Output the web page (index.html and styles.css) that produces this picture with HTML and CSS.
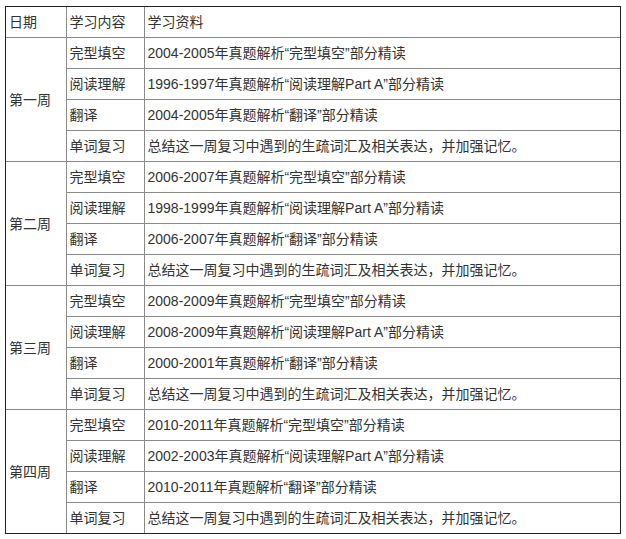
FILE: index.html
```html
<!DOCTYPE html>
<html lang="zh-CN">
<head>
<meta charset="utf-8">
<title>复习计划</title>
<link rel="stylesheet" href="styles.css">
</head>
<body>
<div class="frame">
<table class="plan">
<colgroup><col class="c-date"><col class="c-topic"><col class="c-material"></colgroup>
<tr><td>日期</td><td>学习内容</td><td>学习资料</td></tr>
<tr><td class="week" rowspan="4">第一周</td><td>完型填空</td><td>2004-2005年真题解析“完型填空”部分精读</td></tr>
<tr><td>阅读理解</td><td>1996-1997年真题解析“阅读理解Part A”部分精读</td></tr>
<tr><td>翻译</td><td>2004-2005年真题解析“翻译”部分精读</td></tr>
<tr><td>单词复习</td><td>总结这一周复习中遇到的生疏词汇及相关表达，并加强记忆。</td></tr>
<tr><td class="week" rowspan="4">第二周</td><td>完型填空</td><td>2006-2007年真题解析“完型填空”部分精读</td></tr>
<tr><td>阅读理解</td><td>1998-1999年真题解析“阅读理解Part A”部分精读</td></tr>
<tr><td>翻译</td><td>2006-2007年真题解析“翻译”部分精读</td></tr>
<tr><td>单词复习</td><td>总结这一周复习中遇到的生疏词汇及相关表达，并加强记忆。</td></tr>
<tr><td class="week" rowspan="4">第三周</td><td>完型填空</td><td>2008-2009年真题解析“完型填空”部分精读</td></tr>
<tr><td>阅读理解</td><td>2008-2009年真题解析“阅读理解Part A”部分精读</td></tr>
<tr><td>翻译</td><td>2000-2001年真题解析“翻译”部分精读</td></tr>
<tr><td>单词复习</td><td>总结这一周复习中遇到的生疏词汇及相关表达，并加强记忆。</td></tr>
<tr><td class="week" rowspan="4">第四周</td><td>完型填空</td><td>2010-2011年真题解析“完型填空”部分精读</td></tr>
<tr><td>阅读理解</td><td>2002-2003年真题解析“阅读理解Part A”部分精读</td></tr>
<tr><td>翻译</td><td>2010-2011年真题解析“翻译”部分精读</td></tr>
<tr><td>单词复习</td><td>总结这一周复习中遇到的生疏词汇及相关表达，并加强记忆。</td></tr>
</table>
</div>
</body>
</html>
```
FILE: styles.css
```css
html, body {
  margin: 0;
  padding: 0;
  background: #ffffff;
}
body {
  padding: 6px 0 0 5px;
  font-family: "Liberation Sans", "Noto Sans CJK SC", sans-serif;
  font-size: 14px;
  color: #333333;
}
.frame {
  width: 614px;
  border: 1px solid #222222;
}
.plan {
  width: 614px;
  border-collapse: collapse;
  border: 1px hidden;
  table-layout: fixed;
}
.c-date { width: 60px; }
.c-topic { width: 78px; }
.plan td {
  height: 30px;
  padding: 0 0 0 3px;
  border: 1px solid #8a8a8a;
  vertical-align: middle;
  white-space: nowrap;
  line-height: 18px;
}
```
